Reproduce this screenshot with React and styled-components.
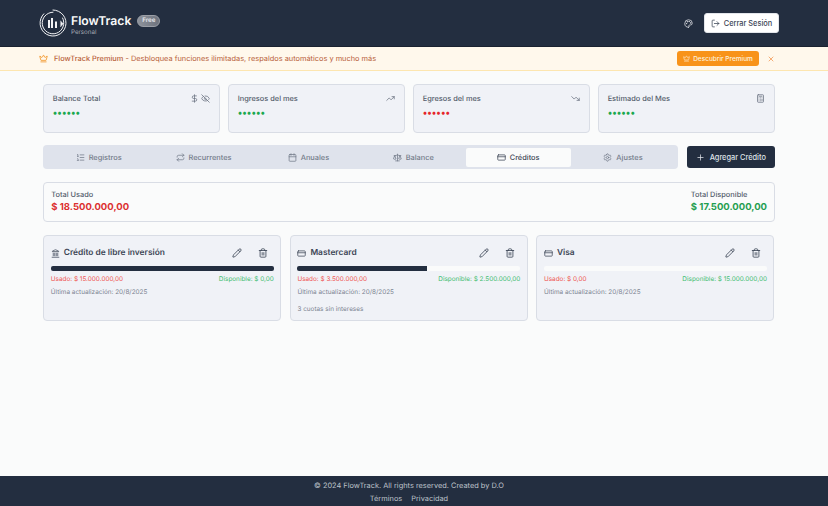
import React from "react";
import styled, { createGlobalStyle } from "styled-components";
import {
  Calendar,
  CreditCard,
  Crown,
  DollarSign,
  EyeOff,
  ListOrdered,
  LogOut,
  Palette,
  Pencil,
  Plus,
  Repeat,
  Scale,
  Settings,
  Trash2,
  TrendingDown,
  TrendingUp,
  Calculator,
  Landmark,
  X,
} from "lucide-react";

const GlobalStyle = createGlobalStyle`
  * {
    box-sizing: border-box;
  }
  body {
    margin: 0;
    font-family: Inter, "Liberation Sans", sans-serif;
    background: #fafbfb;
    text-rendering: geometricPrecision;
  }
`;

const Page = styled.div`
  display: flex;
  flex-direction: column;
  height: 506px;
  overflow: hidden;
`;

const Header = styled.header`
  height: 47px;
  flex: none;
  display: flex;
  align-items: center;
  justify-content: space-between;
  padding: 0 49px 0 39px;
  background: #232e40;
  border-bottom: 1px solid #1a2230;
`;

const Brand = styled.div`
  display: flex;
  align-items: center;
  gap: 4px;
`;

const BrandText = styled.div`
  display: flex;
  flex-direction: column;
  padding-top: 2px;
`;

const BrandRow = styled.div`
  display: flex;
  align-items: center;
  gap: 6px;
`;

const BrandName = styled.span`
  color: #fafbfb;
  font-size: 12.2px;
  font-weight: 600;
  line-height: 16px;
`;

const FreeBadge = styled.span`
  height: 12px;
  width: 23px;
  display: flex;
  align-items: center;
  justify-content: center;
  border-radius: 6px;
  background: linear-gradient(90deg, #8e939c, #6d727d);
  border: 1px solid #9a9ea6;
  color: #e8eaed;
  font-size: 6.2px;
  font-weight: 600;
`;

const BrandSub = styled.span`
  color: #a4a9b2;
  font-size: 6.2px;
  line-height: 7px;
`;

const HeaderActions = styled.div`
  display: flex;
  align-items: center;
  gap: 11px;
  color: #e5e7eb;
`;

const LogoutButton = styled.button`
  height: 20px;
  width: 75px;
  padding: 0;
  display: flex;
  align-items: center;
  justify-content: center;
  gap: 4px;
  border: 1px solid #e2e5ea;
  border-radius: 3px;
  background: #fff;
  color: #3a4454;
  font: 500 7.4px Inter, sans-serif;
`;

const Banner = styled.div`
  height: 24px;
  flex: none;
  display: flex;
  align-items: center;
  padding: 0 53px 0 39px;
  background: #fff8ec;
  border-bottom: 1px solid #fde6b0;
  color: #f08c16;
`;

const BannerText = styled.p`
  flex: 1;
  margin: 0 0 0 6px;
  color: #b8603a;
  font-size: 7.4px;
  font-weight: 400;
  white-space: nowrap;

  b {
    font-weight: 500;
  }
`;

const PremiumButton = styled.button`
  width: 82px;
  height: 15px;
  padding: 0;
  display: flex;
  align-items: center;
  justify-content: center;
  gap: 3px;
  border: 0;
  border-radius: 3px;
  background: #f8931a;
  color: #fdf1dd;
  font: 500 6.5px Inter, sans-serif;
`;

const CloseIcon = styled.span`
  display: flex;
  margin-left: 8px;
  color: #f0873a;
`;

// the right side leaves 10px more than the left, the footer does the same
const Main = styled.main`
  flex: 1;
  display: flex;
  flex-direction: column;
  padding: 13px 53.5px 0 43.3px;
`;

const StatGrid = styled.div`
  display: grid;
  grid-template-columns: repeat(4, 1fr);
  gap: 8.6px;
`;

const Panel = styled.div`
  border: 1px solid #d9dde5;
  border-radius: 4px;
  background: #f0f2f7;
`;

const StatCard = styled(Panel)`
  height: 49px;
  padding: 8px 8.5px 0;
`;

const StatHead = styled.div`
  display: flex;
  align-items: center;
  justify-content: space-between;
  height: 11px;
  color: #6a7280;
`;

const StatLabel = styled.span`
  color: #535c6b;
  font-size: 7.4px;
  font-weight: 500;
`;

const StatIcons = styled.span`
  display: flex;
  gap: 2px;
`;

const Dots = styled.div`
  margin-top: 4px;
  color: ${(p) => (p.$bad ? "#e5252a" : "#1aa84f")};
  font-size: 9.6px;
  font-weight: 700;
  line-height: 12px;
`;

const TabRow = styled.div`
  display: flex;
  align-items: center;
  gap: 8.6px;
  margin-top: 12px;
`;

const TabBar = styled.nav`
  flex: 1;
  height: 24px;
  padding: 2.5px 3px;
  display: grid;
  grid-template-columns: repeat(6, 1fr);
  border-radius: 4px;
  background: #dfe3ec;
`;

const Tab = styled.div`
  display: flex;
  align-items: center;
  justify-content: center;
  gap: 4px;
  border-radius: 2px;
  font-size: 7.4px;
  font-weight: 500;
  color: ${(p) => (p.$active ? "#3d4656" : "#737b8a")};
  background: ${(p) => (p.$active ? "#fafbfb" : "transparent")};
`;

const AddButton = styled.button`
  width: 87.5px;
  height: 22px;
  padding: 0;
  display: flex;
  align-items: center;
  justify-content: center;
  gap: 5px;
  border: 0;
  border-radius: 3px;
  background: #232e40;
  color: #dfe2e7;
  font: 500 7.4px Inter, sans-serif;
`;

const Totals = styled(Panel)`
  height: 40px;
  margin-top: 12.5px;
  padding: 6px 6.5px 0 7px;
  display: flex;
  justify-content: space-between;
  background: #fafbfb;
`;

const TotalBlock = styled.div`
  display: flex;
  flex-direction: column;
  gap: 1px;
`;

const TotalLabel = styled.span`
  color: #535c6b;
  font-size: 7.4px;
  font-weight: 500;
  line-height: 11px;
`;

const TotalValue = styled.span`
  color: ${(p) => (p.$good ? "#1f9e50" : "#dc2f2f")};
  font-size: 9.5px;
  font-weight: 700;
  line-height: 14px;
`;

const CreditGrid = styled.div`
  display: grid;
  grid-template-columns: repeat(3, 1fr);
  gap: 8.6px;
  margin-top: 13.5px;
`;

const CreditCardBox = styled(Panel)`
  height: 85.5px;
  padding: 9px 6.5px 0;
`;

const CreditHead = styled.div`
  display: flex;
  align-items: center;
  height: 16px;
  gap: 4px;
  color: #3d4757;
`;

const CreditName = styled.h3`
  flex: 1;
  margin: 0;
  color: #3d4656;
  font-size: 8.4px;
  font-weight: 600;
`;

const CreditActions = styled.div`
  display: flex;
  gap: 16px;
  margin-right: 5.5px;
`;

const Track = styled.div`
  height: 4.5px;
  margin-top: 5px;
  border-radius: 2px;
  overflow: hidden;
  background: #fafbfb;
`;

const Fill = styled.div`
  height: 100%;
  background: #232e40;
`;

const Amounts = styled.div`
  display: flex;
  justify-content: space-between;
  margin-top: 4px;
  font-size: 6.4px;
  line-height: 9px;
`;

const Used = styled.span`
  color: #ef5350;
`;

const Available = styled.span`
  color: #3fbd70;
`;

const Note = styled.p`
  margin: ${(p) => (p.$gap ? "7.5px" : "4.5px")} 0 0;
  color: #7b8391;
  font-size: 6.4px;
  line-height: 9px;
`;

const Footer = styled.footer`
  height: 30.5px;
  flex: none;
  padding: 4px 10px 0 0;
  background: #232e40;
  text-align: center;
  color: #bdc2ca;
  font-size: 7.4px;
  line-height: 11px;
`;

const FooterLinks = styled.div`
  display: flex;
  justify-content: center;
  gap: 9px;
  margin-top: 2px;
`;

const Logo = () => (
  <svg width="28" height="28" viewBox="0 0 28 28" fill="none" stroke="#f2f3f5" strokeLinecap="round">
    <path d="M14 1a13 13 0 1 1-9.2 3.8" strokeWidth="1" />
    <path d="M14 3.2a10.8 10.8 0 1 0 9.6 5.8" strokeWidth="1" />
    <path d="M10 11v8M13 9v10M17 12.5V19" strokeWidth="2" strokeLinecap="butt" />
    <path d="M21.7 12l2.6 2.8-2.6 2.9z" fill="#f2f3f5" strokeWidth="0.4" />
  </svg>
);

const stats = [
  { label: "Balance Total", icons: [DollarSign, EyeOff] },
  { label: "Ingresos del mes", icons: [TrendingUp] },
  { label: "Egresos del mes", icons: [TrendingDown], bad: true },
  { label: "Estimado del Mes", icons: [Calculator] },
];

const tabs = [
  { label: "Registros", icon: ListOrdered },
  { label: "Recurrentes", icon: Repeat },
  { label: "Anuales", icon: Calendar },
  { label: "Balance", icon: Scale },
  { label: "Créditos", icon: CreditCard, active: true },
  { label: "Ajustes", icon: Settings },
];

const credits = [
  {
    name: "Crédito de libre inversión",
    icon: Landmark,
    used: "$ 15.000.000,00",
    free: "$ 0,00",
    pct: 100,
  },
  {
    name: "Mastercard",
    icon: CreditCard,
    used: "$ 3.500.000,00",
    free: "$ 2.500.000,00",
    pct: 58.3,
    note: "3 cuotas sin intereses",
  },
  {
    name: "Visa",
    icon: CreditCard,
    used: "$ 0,00",
    free: "$ 15.000.000,00",
    pct: 0,
  },
];

export default function App() {
  return (
    <Page>
      <GlobalStyle />
      <Header>
        <Brand>
          <Logo />
          <BrandText>
            <BrandRow>
              <BrandName>FlowTrack</BrandName>
              <FreeBadge>Free</FreeBadge>
            </BrandRow>
            <BrandSub>Personal</BrandSub>
          </BrandText>
        </Brand>
        <HeaderActions>
          <Palette size={9} />
          <LogoutButton>
            <LogOut size={9} />
            Cerrar Sesión
          </LogoutButton>
        </HeaderActions>
      </Header>

      <Banner>
        <Crown size={9} />
        <BannerText>
          <b>FlowTrack Premium</b> - Desbloquea funciones ilimitadas, respaldos automáticos y mucho más
        </BannerText>
        <PremiumButton>
          <Crown size={7} />
          Descubrir Premium
        </PremiumButton>
        <CloseIcon>
          <X size={8} />
        </CloseIcon>
      </Banner>

      <Main>
        <StatGrid>
          {stats.map((s) => (
            <StatCard key={s.label}>
              <StatHead>
                <StatLabel>{s.label}</StatLabel>
                <StatIcons>
                  {s.icons.map((Icon, i) => (
                    <Icon key={i} size={9} />
                  ))}
                </StatIcons>
              </StatHead>
              <Dots $bad={s.bad}>••••••</Dots>
            </StatCard>
          ))}
        </StatGrid>

        <TabRow>
          <TabBar>
            {tabs.map((t) => (
              <Tab key={t.label} $active={t.active}>
                <t.icon size={9} />
                {t.label}
              </Tab>
            ))}
          </TabBar>
          <AddButton>
            <Plus size={9} />
            Agregar Crédito
          </AddButton>
        </TabRow>

        <Totals>
          <TotalBlock>
            <TotalLabel>Total Usado</TotalLabel>
            <TotalValue>$ 18.500.000,00</TotalValue>
          </TotalBlock>
          <TotalBlock>
            <TotalLabel>Total Disponible</TotalLabel>
            <TotalValue $good>$ 17.500.000,00</TotalValue>
          </TotalBlock>
        </Totals>

        <CreditGrid>
          {credits.map((c) => (
            <CreditCardBox key={c.name}>
              <CreditHead>
                <c.icon size={9} />
                <CreditName>{c.name}</CreditName>
                <CreditActions>
                  <Pencil size={10} />
                  <Trash2 size={10} />
                </CreditActions>
              </CreditHead>
              <Track>
                <Fill style={{ width: `${c.pct}%` }} />
              </Track>
              <Amounts>
                <Used>Usado: {c.used}</Used>
                <Available>Disponible: {c.free}</Available>
              </Amounts>
              <Note>Última actualización: 20/8/2025</Note>
              {c.note && <Note $gap>{c.note}</Note>}
            </CreditCardBox>
          ))}
        </CreditGrid>
      </Main>

      <Footer>
        © 2024 FlowTrack. All rights reserved. Created by D.O
        <FooterLinks>
          <span>Términos</span>
          <span>Privacidad</span>
        </FooterLinks>
      </Footer>
    </Page>
  );
}
